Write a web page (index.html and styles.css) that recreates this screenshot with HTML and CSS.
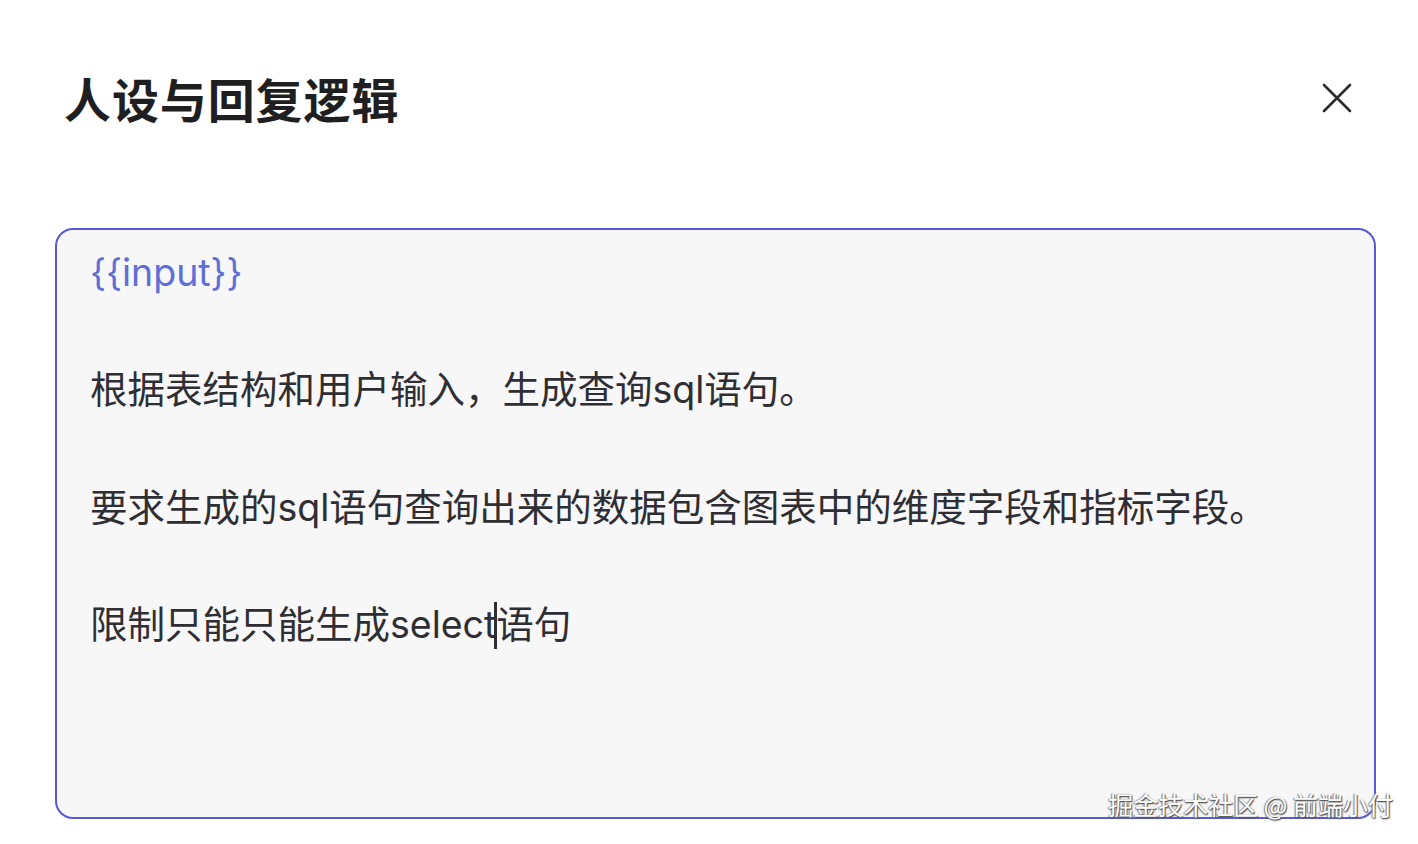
FILE: index.html
```html
<!DOCTYPE html>
<html lang="zh-CN">
<head>
<meta charset="utf-8">
<title>人设与回复逻辑</title>
<link rel="stylesheet" href="styles.css">
</head>
<body>
<div class="dialog">
  <div class="header">
    <h1 class="title">人设与回复逻辑</h1>
    <button class="close" aria-label="关闭">
      <svg width="30" height="30" viewBox="0 0 30 30"><path d="M2 2 L28 28 M28 2 L2 28" stroke="#2b2b2e" stroke-width="2.6" stroke-linecap="round" fill="none"/></svg>
    </button>
  </div>
  <div class="editor">
    <p class="line var">{{input}}</p>
    <p class="line blank">&nbsp;</p>
    <p class="line">根据表结构和用户输入，生成查询sql语句。</p>
    <p class="line blank">&nbsp;</p>
    <p class="line">要求生成的sql语句查询出来的数据包含图表中的维度字段和指标字段。</p>
    <p class="line blank">&nbsp;</p>
    <p class="line">限制只能只能生成select<span class="caret"></span>语句</p>
  </div>
  <div class="watermark">掘金技术社区 @ 前端小付</div>
</div>
</body>
</html>
```

FILE: styles.css
```css
html, body {
  margin: 0;
  padding: 0;
  background: #ffffff;
}
body {
  font-family: "Inter", "Noto Sans CJK SC", sans-serif;
  color: #2e2e33;
}
.dialog {
  position: relative;
  width: 1418px;
  height: 844px;
  box-sizing: border-box;
  padding: 0 42px 0 55px;
}
.header {
  display: flex;
  align-items: center;
  justify-content: space-between;
  height: 228px;
  padding: 0 0 34px 9px;
  box-sizing: border-box;
}
.title {
  margin: 0;
  font-family: "Noto Sans CJK SC", sans-serif;
  font-size: 47px;
  font-weight: 700;
  color: #1f1f22;
  letter-spacing: 0.9px;
}
.close {
  border: 0;
  background: none;
  padding: 0;
  margin: 0 24px 0 0;
  width: 30px;
  height: 30px;
  display: flex;
  position: relative;
  top: 1px;
}
.editor {
  height: 591px;
  box-sizing: border-box;
  border: 2px solid #5858d8;
  border-radius: 18px;
  background: #f7f7f8;
  padding: 14px 33px;
}
.line {
  margin: 0;
  font-size: 37.5px;
  line-height: 58.7px;
  white-space: nowrap;
}
.var {
  color: #5f6fd6;
}
.caret {
  display: inline-block;
  width: 3px;
  height: 47px;
  background: #2e2e33;
  vertical-align: -11px;
  margin: 0 -1px 0 -2px;
}
.watermark {
  position: absolute;
  right: 25px;
  top: 786px;
  font-family: "Noto Sans CJK SC", sans-serif;
  font-size: 25px;
  color: #ffffff;
  text-shadow: 1px 1px 1px #555, -1px 0 1px #888, 0 1px 2px #666;
  white-space: nowrap;
}
```
